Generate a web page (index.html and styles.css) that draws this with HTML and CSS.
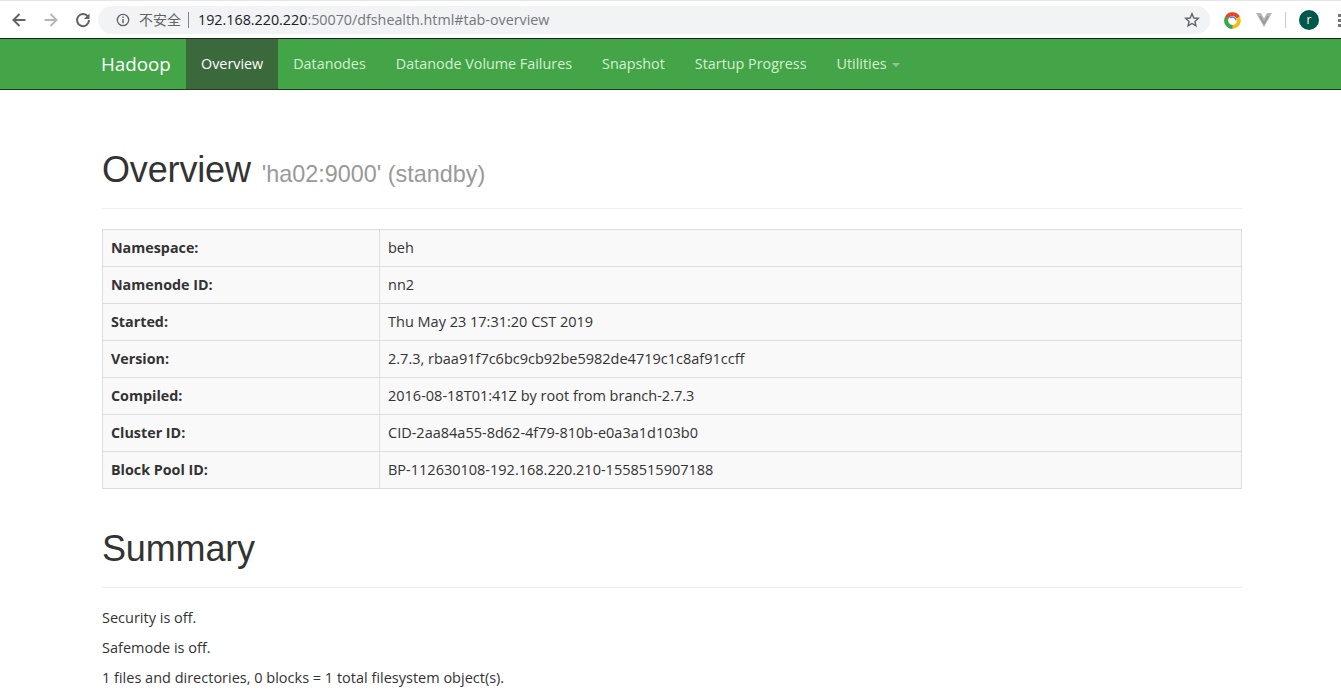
FILE: index.html
```html
<!DOCTYPE html>
<html lang="zh-CN">
<head>
    <meta charset="UTF-8">
    <title>Namenode information</title>
    <link rel="stylesheet" href="styles.css">
</head>
<body>
    <div class="browser-bar">
        <div class="browser-nav">
            <svg class="nav-icon" viewBox="0 0 16 16"><path d="M14.500 8H3M8.500 2L2.500 8l6 6" fill="none" stroke="#5f6368" stroke-width="2"/></svg>
            <svg class="nav-icon" viewBox="0 0 16 16"><path d="M1.500 8H13M7.500 2l6 6-6 6" fill="none" stroke="#b4b7ba" stroke-width="2"/></svg>
            <svg class="nav-icon" viewBox="0 0 16 16"><path d="M13 4.800A6 6 0 1 0 14 8" fill="none" stroke="#5f6368" stroke-width="2"/><path d="M14.500 1.500v5.500h-5.500z" fill="#5f6368"/></svg>
        </div>
        <div class="omnibox">
            <svg class="info-icon" viewBox="0 0 14 14"><circle cx="7" cy="7" r="5.700" fill="none" stroke="#5f6368" stroke-width="1.300"/><path d="M7 6v4.200M7 3.600v1.400" stroke="#5f6368" stroke-width="1.400"/></svg>
            <span class="insecure">不安全</span>
            <span class="omni-sep"></span>
            <span class="url"><span class="host">192.168.220.220</span>:50070/dfshealth.html#tab-overview</span>
            <svg class="star-icon" viewBox="0 0 16 16"><path d="M8 1.800l1.800 4.200 4.500.4-3.400 3 1 4.400L8 11.500l-3.900 2.300 1-4.400-3.400-3 4.500-.4z" fill="none" stroke="#5f6368" stroke-width="1.400"/></svg>
        </div>
        <div class="browser-ext">
            <svg class="ext-ring" viewBox="0 0 16 16">
                <circle cx="8" cy="8" r="6" fill="none" stroke="#fbbc05" stroke-width="3.600"/>
                <path d="M2.800 5A6 6 0 0 1 13.200 5" fill="none" stroke="#ea4335" stroke-width="3.600"/>
                <path d="M2.800 5A6 6 0 0 0 8 14" fill="none" stroke="#34a853" stroke-width="3.600"/>
                <circle cx="8" cy="8" r="3.200" fill="#fff"/>
                <path d="M5.600 5.800A3.300 3.300 0 0 1 11.300 8" fill="none" stroke="#4285f4" stroke-width="1.200"/>
            </svg>
            <svg class="ext-vee" viewBox="0 0 16 14"><path d="M0 0h5L8 5.500 11 0h5L8 14z" fill="#b5b5b5"/><path d="M4.500 3L8 9l3.500-6 1.500 0L8 12 3 3z" fill="#949494"/></svg>
            <span class="ext-sep"></span>
            <span class="avatar">r</span>
            <span class="menu-dots"><i></i><i></i><i></i></span>
        </div>
    </div>

    <nav class="navbar">
        <a class="brand">Hadoop</a>
        <ul class="nav-list">
            <li class="active">Overview</li>
            <li>Datanodes</li>
            <li>Datanode Volume Failures</li>
            <li>Snapshot</li>
            <li>Startup Progress</li>
            <li>Utilities <span class="caret"></span></li>
        </ul>
    </nav>

    <div class="container">
        <div class="page-header">
            <h1>Overview <small>'ha02:9000' (standby)</small></h1>
        </div>
        <table class="info-table">
            <tr><th>Namespace:</th><td>beh</td></tr>
            <tr><th>Namenode ID:</th><td>nn2</td></tr>
            <tr><th>Started:</th><td>Thu May 23 17:31:20 CST 2019</td></tr>
            <tr><th>Version:</th><td>2.7.3, rbaa91f7c6bc9cb92be5982de4719c1c8af91ccff</td></tr>
            <tr><th>Compiled:</th><td>2016-08-18T01:41Z by root from branch-2.7.3</td></tr>
            <tr><th>Cluster ID:</th><td>CID-2aa84a55-8d62-4f79-810b-e0a3a1d103b0</td></tr>
            <tr><th>Block Pool ID:</th><td>BP-112630108-192.168.220.210-1558515907188</td></tr>
        </table>
        <div class="page-header summary-header">
            <h1>Summary</h1>
        </div>
        <p>Security is off.</p>
        <p>Safemode is off.</p>
        <p>1 files and directories, 0 blocks = 1 total filesystem object(s).</p>
    </div>
</body>
</html>
```

FILE: styles.css
```css
* {
    box-sizing: border-box;
}
html, body {
    height: 693px;
    overflow: hidden;
}
body {
    margin: 0;
    background-color: #fff;
    color: #333;
    font-family: 'Open Sans', 'Noto Sans CJK SC', sans-serif;
    font-size: 14.500px;
    line-height: 20px;
}
.browser-bar {
    display: flex;
    align-items: center;
    height: 39px;
    padding-top: 1px;
    background-color: #fff;
    border-top: 1px solid #e3e5ea;
    border-bottom: 1px solid #222;
}
.browser-nav {
    display: flex;
    align-items: center;
    gap: 16px;
    width: 98px;
    padding-left: 11px;
}
.nav-icon {
    width: 16px;
    height: 16px;
}
.omnibox {
    display: flex;
    align-items: center;
    width: 1112px;
    height: 28px;
    padding: 0 10px 0 16px;
    background-color: #f1f3f4;
    border-radius: 14px;
    font-size: 14.300px;
}
.info-icon {
    width: 14px;
    height: 14px;
    margin-left: 2px;
}
.insecure {
    margin-left: 9px;
    color: #5f6368;
    font-size: 14px;
}
.omni-sep {
    width: 1px;
    height: 16px;
    margin: 0 9px 0 7px;
    background-color: #80868b;
}
.url {
    color: #73777b;
    font-family: 'Open Sans', sans-serif;
}
.host {
    color: #202124;
}
.star-icon {
    width: 16px;
    height: 16px;
    margin-left: auto;
}
.browser-ext {
    display: flex;
    align-items: center;
    flex: 1;
    padding-left: 14px;
}
.ext-ring {
    width: 17px;
    height: 17px;
}
.ext-vee {
    width: 16px;
    height: 14px;
    margin-left: 15px;
}
.ext-sep {
    width: 1px;
    height: 16px;
    margin: 0 13px 0 13px;
    background-color: #ccc;
}
.avatar {
    width: 20px;
    height: 20px;
    border-radius: 50%;
    background-color: #00574b;
    color: #fff;
    font-size: 12px;
    line-height: 19px;
    text-align: center;
}
.menu-dots {
    display: flex;
    flex-direction: column;
    gap: 2px;
    margin-left: 19px;
}
.menu-dots i {
    width: 3px;
    height: 3px;
    background-color: #777;
}
.navbar {
    display: flex;
    height: 51px;
    padding-left: 86px;
    background-color: #43a547;
    border-bottom: 1px solid #1d3a1e;
}
.brand {
    width: 100px;
    padding: 15px;
    color: #fff;
    font-size: 18.800px;
}
.nav-list {
    display: flex;
    margin: 0;
    padding: 0;
    list-style: none;
}
.nav-list li {
    padding: 15px;
    color: #d6f0d2;
    font-size: 14.350px;
}
.nav-list li.active {
    background-color: #3a693c;
    color: #fff;
}
.caret {
    display: inline-block;
    width: 0;
    height: 0;
    margin-left: 2px;
    vertical-align: middle;
    border-top: 4px solid #9fbf9f;
    border-left: 4px solid transparent;
    border-right: 4px solid transparent;
}
.container {
    width: 1140px;
    margin-left: 102px;
}
.page-header {
    height: 119px;
    padding-top: 60px;
    margin-bottom: 20px;
    border-bottom: 1px solid #eee;
}
h1 {
    margin: 0;
    font-family: 'Liberation Sans', Arial, sans-serif;
    font-size: 36px;
    font-weight: 500;
    line-height: 40px;
    letter-spacing: -0.150px;
}
h1 small {
    margin-left: 1px;
    color: #999;
    font-size: 23.400px;
    font-weight: 400;
    letter-spacing: 0;
}
.info-table {
    width: 100%;
    border-collapse: collapse;
    background-color: #f9f9f9;
}
.info-table th,
.info-table td {
    height: 37px;
    padding: 8px;
    border: 1px solid #ddd;
    text-align: left;
}
.info-table th {
    width: 277px;
    font-size: 14.300px;
    font-weight: 700;
}
.info-table td {
    font-weight: 400;
}
.summary-header {
    height: 99px;
    padding-top: 40px;
}
p {
    margin: 0 0 10px;
}
```
